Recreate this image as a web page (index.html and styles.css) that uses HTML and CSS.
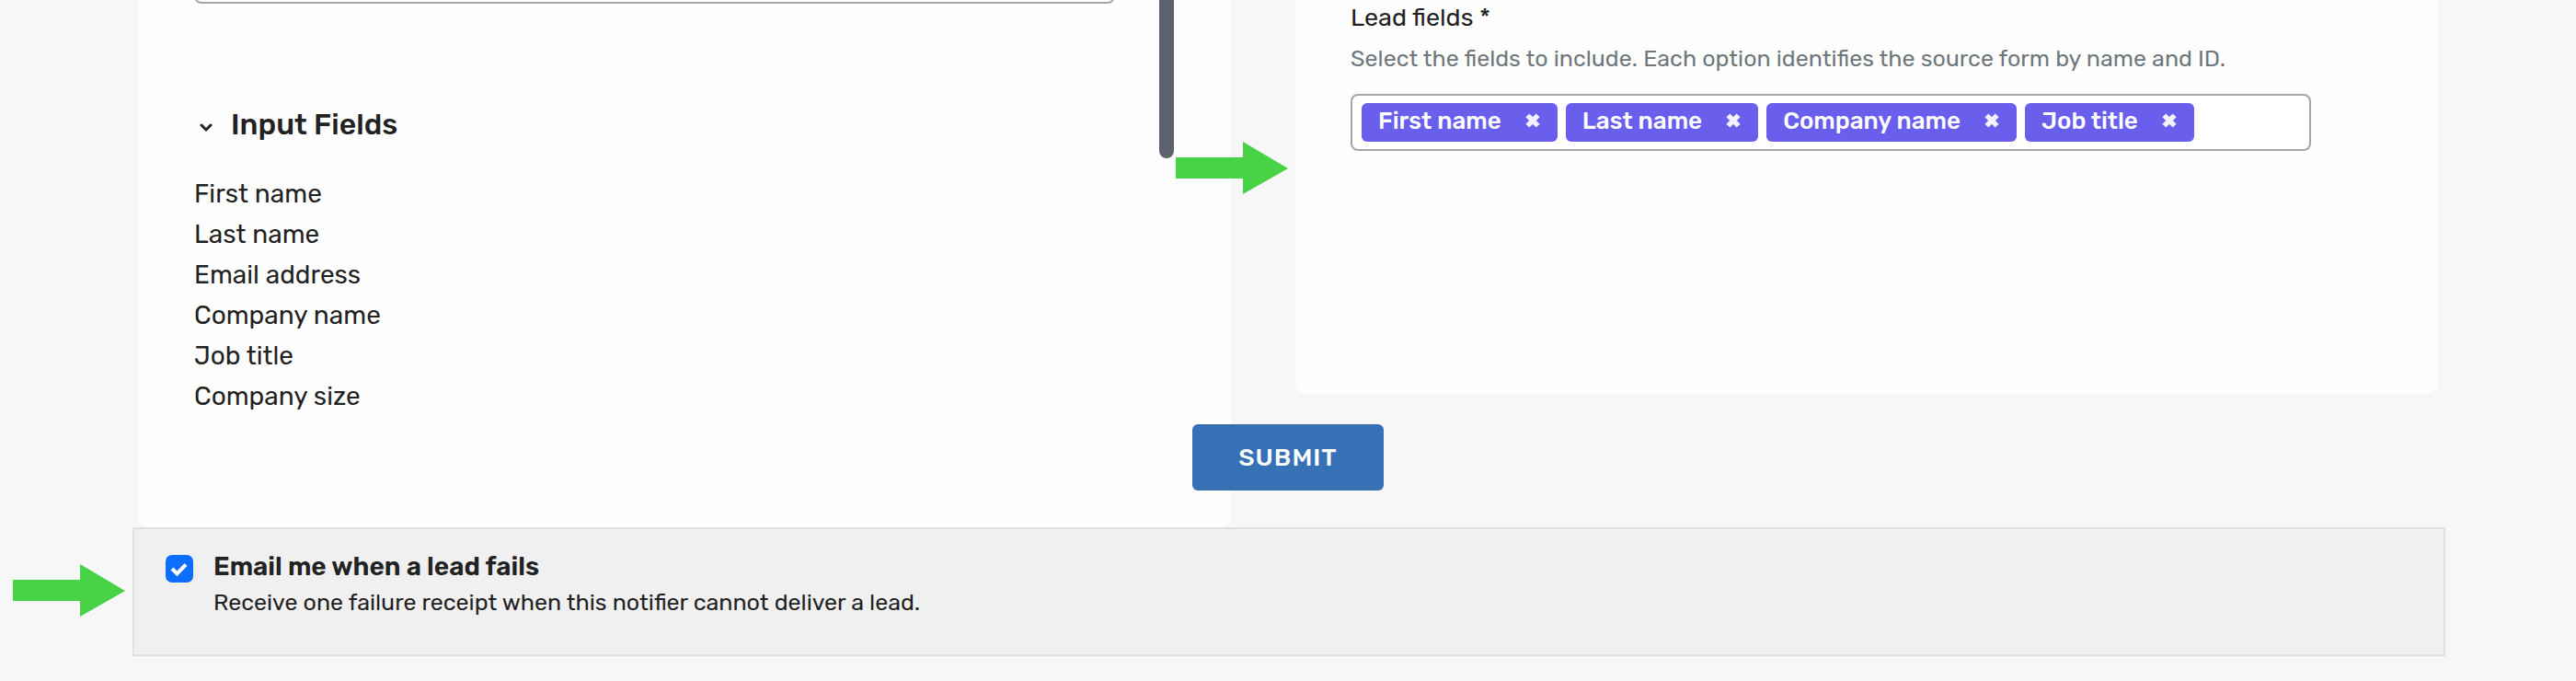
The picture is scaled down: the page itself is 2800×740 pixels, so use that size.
FILE: index.html
```html
<!DOCTYPE html>
<html lang="en">
<head>
  <meta charset="UTF-8">
  <meta name="viewport" content="width=device-width, initial-scale=1.0">
  <title>Lead Notifier</title>
  <link rel="stylesheet" href="styles.css">
</head>
<body>
  <form class="notifier-form">
    <div class="columns">
      <section class="panel source-panel">
        <input type="text" class="field source-field" aria-label="Source form">
        <details class="input-fields" open>
          <summary>
            <svg class="chevron" viewBox="0 0 14 10" aria-hidden="true"><path d="M2 2l5 5 5-5"/></svg>
            <h2>Input Fields</h2>
          </summary>
          <ul class="field-list">
            <li>First name</li>
            <li>Last name</li>
            <li>Email address</li>
            <li>Company name</li>
            <li>Job title</li>
            <li>Company size</li>
          </ul>
        </details>
        <div class="scroll-thumb"></div>
      </section>

      <section class="panel lead-panel">
        <label class="lead-label" for="lead-fields">Lead fields *</label>
        <p class="help" id="lead-help">Select the fields to include. Each option identifies the source form by name and ID.</p>
        <div class="field tag-field">
          <span class="tag">First name
            <button type="button" class="remove" aria-label="Remove First name"><svg viewBox="0 0 16 16"><path d="M3 3l10 10M13 3L3 13"/></svg></button>
          </span>
          <span class="tag">Last name
            <button type="button" class="remove" aria-label="Remove Last name"><svg viewBox="0 0 16 16"><path d="M3 3l10 10M13 3L3 13"/></svg></button>
          </span>
          <span class="tag">Company name
            <button type="button" class="remove" aria-label="Remove Company name"><svg viewBox="0 0 16 16"><path d="M3 3l10 10M13 3L3 13"/></svg></button>
          </span>
          <span class="tag">Job title
            <button type="button" class="remove" aria-label="Remove Job title"><svg viewBox="0 0 16 16"><path d="M3 3l10 10M13 3L3 13"/></svg></button>
          </span>
          <input type="text" class="tag-input" id="lead-fields" aria-describedby="lead-help">
        </div>
        <svg class="arrow lead-arrow" viewBox="0 0 122 58" aria-hidden="true"><path d="M0 17h73V0l49 29-49 28V40H0z"/></svg>
      </section>

      <div class="actions">
        <button type="submit" class="submit">SUBMIT</button>
      </div>
    </div>

    <div class="notify">
      <span class="check">
        <input type="checkbox" id="email-fail" aria-describedby="email-fail-text" checked>
        <svg viewBox="0 0 30 30" aria-hidden="true"><path d="M7 15l5.500 5.500L22 10.500"/></svg>
      </span>
      <div>
        <label class="notify-label" for="email-fail">Email me when a lead fails</label>
        <p class="notify-text" id="email-fail-text">Receive one failure receipt when this notifier cannot deliver a lead.</p>
      </div>
      <svg class="arrow notify-arrow" viewBox="0 0 122 58" aria-hidden="true"><path d="M0 17h73V0l49 29-49 28V40H0z"/></svg>
    </div>
  </form>
</body>
</html>
```

FILE: styles.css
```css
* {
  box-sizing: border-box;
}

body {
  margin: 0;
  background: #f7f7f7;
  color: #222;
  font-family: Rubik, Roboto, sans-serif;
  font-size: 28px;
  line-height: 44px;
}

h2, p, ul {
  margin: 0;
  padding: 0;
}

button, input {
  font-family: inherit;
}

.notifier-form {
  padding: 0 142px 24px 144px;
}

/* the left panel runs down behind the submit row */
.columns {
  display: grid;
  grid-template-columns: minmax(0, 1188fr) minmax(0, 1242fr);
  column-gap: 70px;
  padding: 0 8px 0 6px;
}

.panel {
  position: relative;
  background: #fefefe;
  border-radius: 0 0 10px 10px;
}

.source-panel {
  grid-column: 1;
  grid-row: 1 / 3;
  padding: 0 126px 0 61px;
  overflow: hidden;
}

.lead-panel {
  grid-column: 2;
  grid-row: 1;
  padding: 0 138px 263px 60px;
}

.actions {
  grid-column: 1 / 3;
  grid-row: 2;
  z-index: 1;
  padding: 34px 0 40px;
  text-align: center;
}

.field {
  border: 2px solid #a6a6a6;
  border-radius: 8px;
  background: #fff;
}

.source-field {
  display: block;
  width: 100%;
  height: 62px;
  margin-top: -58px;
}

.input-fields {
  padding-top: 109px;
}

summary {
  display: flex;
  align-items: center;
  gap: 20px;
  padding-left: 6px;
  list-style: none;
  cursor: pointer;
}

h2 {
  font-size: 32px;
  font-weight: 500;
}

.chevron {
  width: 14px;
  height: 10px;
  margin-top: 8px;
}

.chevron path {
  fill: none;
  stroke: #222;
  stroke-width: 3;
  stroke-linecap: round;
}

.field-list {
  padding-top: 32px;
  list-style: none;
}

.scroll-thumb {
  position: absolute;
  top: 0;
  right: 62px;
  width: 16px;
  height: 172px;
  border-radius: 0 0 8px 8px;
  background: #5c636e;
}

.lead-label {
  display: block;
  font-size: 27px;
  line-height: 38px;
}

.help {
  padding-bottom: 12px;
  color: #6f777c;
  font-size: 25px;
  line-height: 52px;
}

.tag-field {
  display: flex;
  gap: 9px;
  padding: 8px 10px;
}

.tag {
  display: flex;
  align-items: center;
  gap: 25px;
  padding: 0 18px 2px;
  border-radius: 6px;
  background: #6a5eed;
  color: #fff;
  font-size: 26px;
  font-weight: 500;
  line-height: 40px;
  white-space: nowrap;
}

.remove {
  display: flex;
  padding: 0 0 2px;
  border: 0;
  background: none;
  cursor: pointer;
}

.remove svg {
  width: 18px;
  height: 18px;
}

.remove path {
  stroke: #f3f1ff;
  stroke-width: 5;
}

.tag-input {
  flex: 1;
  width: 0;
  min-width: 0;
  padding: 0;
  border: 0;
  outline: 0;
  background: none;
  font-size: 26px;
}

.submit {
  padding: 0 50px;
  border: 0;
  border-radius: 6px;
  background: #3671b6;
  color: #fff;
  font-size: 27px;
  font-weight: 500;
  letter-spacing: 1px;
  line-height: 72px;
  vertical-align: top;
  cursor: pointer;
}

.notify {
  position: relative;
  display: flex;
  gap: 22px;
  padding: 21px 34px 37px;
  border: 2px solid #e1e1e1;
  background: #f0f0f0;
}

.check {
  display: grid;
  width: 30px;
  height: 30px;
  margin-top: 7px;
}

.check input, .check svg {
  grid-area: 1 / 1;
  width: 30px;
  height: 30px;
  margin: 0;
}

.check input {
  appearance: none;
  border: 2px solid #0d6efd;
  border-radius: 7px;
  background: #fff;
}

.check input:checked {
  background: #0d6efd;
}

.check svg {
  pointer-events: none;
}

.check path {
  fill: none;
  stroke: #fff;
  stroke-width: 4;
}

.notify-label {
  display: block;
  font-weight: 600;
  line-height: 40px;
}

.notify-text {
  font-size: 25px;
  line-height: 38px;
}

.arrow {
  position: absolute;
  width: 122px;
  height: 58px;
  fill: #48d246;
}

.lead-arrow {
  top: 154px;
  left: -130px;
}

.notify-arrow {
  top: 38px;
  left: -132px;
}
```
